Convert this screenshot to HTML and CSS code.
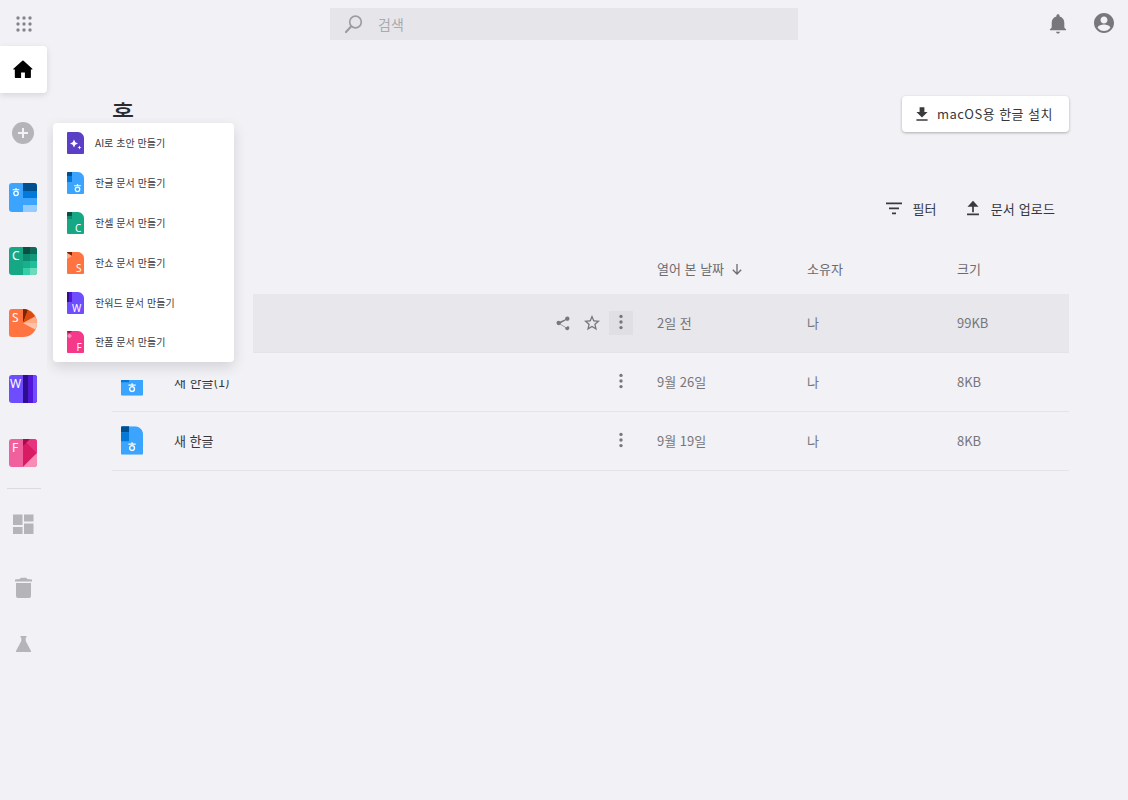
FILE: index.html
```html
<!DOCTYPE html>
<html lang="ko">
<head>
<meta charset="utf-8">
<title>한컴독스 홈</title>
<link rel="stylesheet" href="styles.css">
</head>
<body>
<svg class="sprite" xmlns="http://www.w3.org/2000/svg">
  <symbol id="hieut" viewBox="0 0 12 12">
    <path d="M6 .5v2M1.500 3h9" fill="none" stroke="currentColor" stroke-width="1.600"/>
    <circle cx="6" cy="7.800" r="3" fill="none" stroke="currentColor" stroke-width="1.700"/>
  </symbol>
  <symbol id="file-shape" viewBox="0 0 17 22">
    <path d="M1 0h10c3 0 6 3 6 6v15a1 1 0 0 1-1 1H1a1 1 0 0 1-1-1V1a1 1 0 0 1 1-1z"/>
  </symbol>
  <symbol id="i-share" viewBox="0 0 24 24">
    <path d="M18 16.100c-.8 0-1.400.3-2 .8l-7.100-4.200c.1-.2.100-.5.100-.7s0-.5-.1-.7L16 7.200c.5.5 1.200.8 2 .8 1.700 0 3-1.300 3-3s-1.300-3-3-3-3 1.300-3 3c0 .2 0 .5.100.7L8 8.900C7.500 8.400 6.800 8 6 8c-1.700 0-3 1.300-3 3s1.300 3 3 3c.8 0 1.500-.3 2-.8l7.100 4.200c-.1.200-.1.400-.1.600 0 1.600 1.300 2.900 2.900 2.900s2.900-1.300 2.900-2.900-1.200-2.900-2.800-2.900z" transform="translate(0 1)"/>
  </symbol>
  <symbol id="i-star" viewBox="0 0 24 24">
    <path d="M22 9.240l-7.190-.62L12 2 9.190 8.630 2 9.240l5.460 4.730L5.820 21 12 17.270 18.180 21l-1.630-7.030L22 9.240zM12 15.400l-3.760 2.270 1-4.280-3.320-2.880 4.380-.38L12 6.100l1.710 4.040 4.380.38-3.320 2.880 1 4.280L12 15.400z"/>
  </symbol>
  <symbol id="i-more" viewBox="0 0 24 24">
    <circle cx="12" cy="5" r="2.100"/><circle cx="12" cy="12" r="2.100"/><circle cx="12" cy="19" r="2.100"/>
  </symbol>
</svg>

<div class="app">
  <header class="topbar">
    <div class="apps">
      <svg width="16" height="16" viewBox="0 0 16 16" fill="#85858b">
        <circle cx="2" cy="2" r="1.700"/><circle cx="8" cy="2" r="1.700"/><circle cx="14" cy="2" r="1.700"/>
        <circle cx="2" cy="8" r="1.700"/><circle cx="8" cy="8" r="1.700"/><circle cx="14" cy="8" r="1.700"/>
        <circle cx="2" cy="14" r="1.700"/><circle cx="8" cy="14" r="1.700"/><circle cx="14" cy="14" r="1.700"/>
      </svg>
    </div>
    <div class="search">
      <svg class="search-icon" width="20" height="20" viewBox="0 0 20 20" fill="none" stroke="#9c9ca2">
        <circle cx="11.500" cy="8" r="5.800" stroke-width="1.700"/>
        <path d="M7.300 12.200 2 18" stroke-width="2.200" stroke-linecap="round"/>
      </svg>
      <span class="search-text">검색</span>
    </div>
    <div class="top-actions">
      <svg width="24" height="24" viewBox="0 0 24 24" fill="#77777c"><path transform="translate(1.200 2.200) scale(.9)" d="M12 22.500c1.200 0 2.100-.9 2.100-2h-4.200c0 1.100.9 2 2.100 2zm7-6.500v-5.500c0-3.300-2.100-6-5.200-6.800v-.7c0-1-.8-1.700-1.800-1.700s-1.800.7-1.800 1.700v.7C7.100 4.500 5 7.200 5 10.500V16l-2 2v1h18v-1l-2-2z"/></svg>
      <svg width="24" height="24" viewBox="0 0 24 24" fill="#77777c"><path d="M12 2C6.480 2 2 6.480 2 12s4.480 10 10 10 10-4.480 10-10S17.520 2 12 2zm0 3.500c1.930 0 3.500 1.570 3.500 3.500S13.930 12.500 12 12.500 8.500 10.930 8.500 9 10.070 5.500 12 5.500zM12 20c-2.600 0-4.900-1.300-6.300-3.300.05-2 4.200-3.100 6.300-3.100s6.250 1.100 6.300 3.100C16.900 18.700 14.600 20 12 20z"/></svg>
    </div>
  </header>

  <div class="layout">
    <nav class="sidebar">
      <div class="home-tile">
        <svg width="24" height="24" viewBox="0 0 24 24" fill="#000"><path transform="translate(.6 .6) scale(.95)" d="M10 20.500v-6h4v6h5.500a.8.800 0 0 0 .8-.8v-8.200l1.200.1c.5 0 .7-.6.300-.9L12.600 2.300a1 1 0 0 0-1.300 0L1.900 10.700c-.4.300-.2.900.3.900l1.200-.1v8.200a.8.800 0 0 0 .8.800z"/></svg>
      </div>
      <div class="nav-item">
        <svg width="22" height="22" viewBox="0 0 22 22"><circle cx="11" cy="11" r="11" fill="#b4b4b9"/><path d="M11 6v10M6 11h10" stroke="#f1f1f6" stroke-width="2"/></svg>
      </div>
      <div class="nav-item">
        <svg width="28" height="29" viewBox="0 0 28 29">
          <rect width="28" height="29" rx="3" fill="#3ba4ff"/>
          <path d="M14 0h11a3 3 0 0 1 3 3v5H14z" fill="#00508f"/>
          <path d="M14 8h14v7H14z" fill="#0579d8"/>
          <path d="M14 15h14v7H14z" fill="#3ba4ff"/>
          <path d="M14 22h14v4a3 3 0 0 1-3 3H14z" fill="#95cbff"/>
          <use href="#hieut" x="2.500" y="4.500" width="9" height="9" color="#fff"/>
        </svg>
      </div>
      <div class="nav-item">
        <svg width="28" height="28" viewBox="0 0 28 28">
          <rect width="28" height="28" rx="3" fill="#16a884"/>
          <path d="M14 0h7v7h-7z" fill="#0a4f42"/><path d="M21 0h4a3 3 0 0 1 3 3v4h-7z" fill="#0f6b57"/>
          <path d="M14 7h7v7h-7z" fill="#0f8a6e"/><path d="M21 7h7v7h-7z" fill="#129a7c"/>
          <path d="M14 14h7v7h-7z" fill="#18b08c"/><path d="M21 14h7v7h-7z" fill="#20bf99"/>
          <path d="M14 21h7v7h-7z" fill="#34cfa6"/><path d="M21 21h7v4a3 3 0 0 1-3 3h-4z" fill="#6adcbd"/>
          <text x="3" y="13" class="tile-letter">C</text>
        </svg>
      </div>
      <div class="nav-item shift-up">
        <svg width="28" height="28" viewBox="0 0 28 28">
          <path d="M3 0h11c8 0 14 6 14 14s-6 14-14 14H3a3 3 0 0 1-3-3V3a3 3 0 0 1 3-3z" fill="#ff7440"/>
          <path d="M14 0c2 0 3.500.3 5 1l-5 13z" fill="#7c2500"/>
          <path d="M19 1c3 1.300 5.500 3.600 7 6.500L14 14z" fill="#d94a10"/>
          <path d="M26 7.500c1.300 2 2 4.200 2 6.500H14z" fill="#ffa985"/>
          <path d="M28 14c0 2.500-.7 4.700-2 6.500L14 14z" fill="#ffc3a8"/>
          <text x="3" y="13" class="tile-letter">S</text>
        </svg>
      </div>
      <div class="nav-item">
        <svg width="28" height="28" viewBox="0 0 28 28">
          <rect width="28" height="28" rx="3" fill="#6e4dff"/>
          <path d="M14 0h5v28h-5z" fill="#2e0d8f"/>
          <path d="M19 0h6a3 3 0 0 1 3 3v22a3 3 0 0 1-3 3h-6z" fill="#5216d8"/>
          <path d="M24 0h1a3 3 0 0 1 3 3v22a3 3 0 0 1-3 3h-1z" fill="#6e4dff"/>
          <text x="1" y="13" class="tile-letter">W</text>
        </svg>
      </div>
      <div class="nav-item">
        <svg width="28" height="28" viewBox="0 0 28 28">
          <rect width="28" height="28" rx="3" fill="#f0609c"/>
          <path d="M14 0h11a3 3 0 0 1 3 3v11L14 0z" fill="#e8347e"/>
          <path d="M14 0l14 14-14 14z" fill="#d81b63"/>
          <path d="M14 0h7l-7 7z" fill="#a30d4a"/>
          <path d="M28 14v11a3 3 0 0 1-3 3H14l7-7z" fill="#f78cb6"/>
          <text x="3" y="13" class="tile-letter">F</text>
        </svg>
      </div>
      <hr class="nav-divider">
      <div class="nav-item">
        <svg width="24" height="24" viewBox="0 0 24 24" fill="#b4b4b9"><path d="M2 13h9.500V2.500H2zm0 9h9.500v-7H2zm11 0h9.500V11.500H13zM13 2.500v7h9.500v-7z"/></svg>
      </div>
      <div class="nav-item">
        <svg width="24" height="24" viewBox="0 0 24 24" fill="#b4b4b9"><path d="M4 5.500V3.500l5-.6.6-1.200h5.800l.6 1.200 5 .6v2zM5 7h15v13a2 2 0 0 1-2 2H7a2 2 0 0 1-2-2z"/></svg>
      </div>
      <div class="nav-item short">
        <svg width="20" height="20" viewBox="0 0 20 20" fill="#b4b4b9"><path d="M7.500 2h6v1.500h-.8V7l5.300 10c.3.500 0 1-.5 1H3.500c-.5 0-.8-.5-.5-1L8.300 7V3.500h-.8z"/></svg>
      </div>
    </nav>

    <main class="content">
      <div class="title-row">
        <h1 class="title">홈</h1>
        <button class="install">
          <svg width="24" height="24" viewBox="0 0 24 24" fill="#3a3a3e"><path d="M19 9.500h-4V3.500H9v6H5l7 7zM5 18.500v2h14v-2z" transform="translate(2.400 2.400) scale(.8)"/></svg>
          <span>macOS용 한글 설치</span>
        </button>
      </div>

      <div class="toolbar">
        <button class="tool">
          <svg width="24" height="24" viewBox="0 0 24 24" fill="#3a3a3e"><path d="M4 6.500h16v1.700H4zM7 11.500h10v1.700H7zM10 16.500h4v1.700h-4z"/></svg>
          <span>필터</span>
        </button>
        <button class="tool">
          <svg width="24" height="24" viewBox="0 0 24 24" fill="#3a3a3e"><path transform="translate(1.800 1.800) scale(.85)" d="M5 18.500v2h14v-2zM12 3.500 5.500 10.500H11v6.500h2v-6.500h5.500z"/></svg>
          <span>문서 업로드</span>
        </button>
      </div>

      <div class="table">
        <div class="row head">
          <div></div>
          <div class="sort">열어 본 날짜
            <svg width="14" height="14" viewBox="0 0 14 14" fill="none" stroke="#6b6b70" stroke-width="1.300"><path d="M7 2v10M2.800 7.800 7 12l4.200-4.200"/></svg>
          </div>
          <div>소유자</div>
          <div>크기</div>
        </div>

        <div class="row item hover">
          <div class="name-cell">
            <svg class="file-icon"><use href="#file-shape" fill="#3ba4ff"/></svg>
            <span class="name">새 한글(2)</span>
            <div class="actions">
              <svg class="act act-share"><use href="#i-share"/></svg>
              <svg class="act act-star"><use href="#i-star"/></svg>
              <span class="more-box"><svg class="act"><use href="#i-more"/></svg></span>
            </div>
          </div>
          <div>2일 전</div><div>나</div><div>99KB</div>
        </div>

        <div class="row item">
          <div class="name-cell">
            <svg class="file-icon" viewBox="0 0 17 22">
              <use href="#file-shape" width="17" height="22" fill="#3ba4ff"/>
              <path d="M1 0h5.200v4.600H0V1a1 1 0 0 1 1-1z" fill="#00508f"/><rect y="4.600" width="6.200" height="7" fill="#0579d8"/>
              <use href="#hieut" x="4.800" y="12" width="7.500" height="7.500" color="#fff"/>
            </svg>
            <span class="name">새 한글(1)</span>
            <div class="actions">
              <span class="more-box plain"><svg class="act"><use href="#i-more"/></svg></span>
            </div>
          </div>
          <div>9월 26일</div><div>나</div><div>8KB</div>
        </div>

        <div class="row item">
          <div class="name-cell">
            <svg class="file-icon" viewBox="0 0 17 22">
              <use href="#file-shape" width="17" height="22" fill="#3ba4ff"/>
              <path d="M1 0h5.200v4.600H0V1a1 1 0 0 1 1-1z" fill="#00508f"/><rect y="4.600" width="6.200" height="7" fill="#0579d8"/>
              <use href="#hieut" x="4.800" y="12" width="7.500" height="7.500" color="#fff"/>
            </svg>
            <span class="name">새 한글</span>
            <div class="actions">
              <span class="more-box plain"><svg class="act"><use href="#i-more"/></svg></span>
            </div>
          </div>
          <div>9월 19일</div><div>나</div><div>8KB</div>
        </div>
      </div>
    </main>
  </div>

  <div class="menu-layer">
    <ul class="menu">
      <li class="menu-item">
        <svg class="menu-icon" viewBox="0 0 17 22">
          <use href="#file-shape" width="17" height="22" fill="#5b3fc4"/>
          <path d="M7 7.500l1.300 2.700 2.700 1.300-2.700 1.300L7 15.500l-1.300-2.700L3 11.500l2.700-1.300zM12.500 13.500l.6 1.400 1.400.6-1.400.6-.6 1.400-.6-1.400-1.400-.6 1.400-.6z" fill="#fff"/>
        </svg>
        <span>AI로 초안 만들기</span>
      </li>
      <li class="menu-item">
        <svg class="menu-icon" viewBox="0 0 17 22">
          <use href="#file-shape" width="17" height="22" fill="#3ba4ff"/>
          <path d="M1 0h4v4H0V1a1 1 0 0 1 1-1z" fill="#00508f"/><rect y="4" width="5" height="6" fill="#0579d8"/>
          <use href="#hieut" x="6" y="11.500" width="9" height="9" color="#fff"/>
        </svg>
        <span>한글 문서 만들기</span>
      </li>
      <li class="menu-item">
        <svg class="menu-icon" viewBox="0 0 17 22">
          <use href="#file-shape" width="17" height="22" fill="#16a884"/>
          <path d="M1 0h4v4H0V1a1 1 0 0 1 1-1z" fill="#0a4f42"/><rect y="4" width="5" height="3" fill="#0f8a6e"/>
          <text x="8" y="20" class="file-letter">C</text>
        </svg>
        <span>한셀 문서 만들기</span>
      </li>
      <li class="menu-item">
        <svg class="menu-icon" viewBox="0 0 17 22">
          <use href="#file-shape" width="17" height="22" fill="#ff7440"/>
          <path d="M0 1a1 1 0 0 1 1-1h4v4z" fill="#7c2500"/><path d="M0 1l5 3-5 3z" fill="#ffa985"/>
          <text x="9" y="20" class="file-letter">S</text>
        </svg>
        <span>한쇼 문서 만들기</span>
      </li>
      <li class="menu-item">
        <svg class="menu-icon" viewBox="0 0 17 22">
          <use href="#file-shape" width="17" height="22" fill="#6e4dff"/>
          <rect width="2" height="10" fill="#2e0d8f"/><rect x="2" width="3" height="10" fill="#5216d8"/>
          <text x="5" y="20" class="file-letter">W</text>
        </svg>
        <span>한워드 문서 만들기</span>
      </li>
      <li class="menu-item">
        <svg class="menu-icon" viewBox="0 0 17 22">
          <use href="#file-shape" width="17" height="22" fill="#f5388a"/>
          <path d="M0 1a1 1 0 0 1 1-1h4L2.500 2.500z" fill="#a30d4a"/><path d="M2.500 2.500 5 5 2.500 7.500 0 5z" fill="#f78cb6"/>
          <text x="9.500" y="20" class="file-letter">F</text>
        </svg>
        <span>한폼 문서 만들기</span>
      </li>
    </ul>
  </div>
</div>
</body>
</html>
```

FILE: styles.css
```css
* { box-sizing: border-box; }

html, body {
  margin: 0;
  padding: 0;
}

body {
  background: #f1f1f6;
  font-family: "Noto Sans CJK KR", "Noto Sans", sans-serif;
  color: #37373b;
}

.sprite { display: none; }

.app {
  position: relative;
  width: 1128px;
  height: 800px;
  overflow: hidden;
}

/* top bar */
.topbar {
  display: grid;
  grid-template-columns: 330px 468px 1fr;
  height: 46px;
  padding-top: 8px;
}

.apps {
  padding: 8px 0 0 16px;
}

.apps svg,
.top-actions svg { display: block; }

.search {
  display: flex;
  align-items: center;
  height: 32px;
  padding-left: 14px;
  background: #e6e6ea;
}

.search-text {
  margin-left: 14px;
  font-size: 14px;
  color: #a9a9ae;
}

.top-actions {
  display: flex;
  justify-content: flex-end;
  gap: 22px;
  padding: 3px 12px 0 0;
}

/* layout */
.layout {
  display: flex;
  height: 754px;
}

.sidebar {
  flex: 0 0 47px;
  display: flex;
  flex-direction: column;
  align-items: flex-start;
}

.home-tile {
  display: flex;
  align-items: center;
  justify-content: center;
  width: 47px;
  height: 47px;
  padding-right: 1px;
  margin-bottom: 8px;
  background: #fff;
  border-radius: 0 4px 4px 0;
  box-shadow: 0 2px 6px rgba(0, 0, 0, .12);
}

.nav-item {
  display: flex;
  align-items: center;
  justify-content: center;
  flex: 0 0 64px;
  width: 46px;
}

.nav-item.short { flex-basis: 48px; }
.nav-item.shift-up { padding-bottom: 4px; }

.tile-letter {
  font-family: "Noto Sans", sans-serif;
  font-size: 12px;
  font-weight: 400;
  fill: #fff;
}

.file-letter {
  font-family: "Noto Sans", sans-serif;
  font-size: 10px;
  font-weight: 400;
  fill: #fff;
}

.nav-divider {
  align-self: center;
  width: 34px;
  height: 1px;
  margin: 3px 0 3px;
  border: 0;
  background: #dcdce0;
}

/* content */
.content {
  flex: 1;
  padding: 50px 59px 0 65px;
}

.title-row {
  display: flex;
  justify-content: space-between;
  align-items: flex-start;
  height: 36px;
}

.title {
  margin: 0;
  font-size: 24px;
  line-height: 34px;
  font-weight: 500;
  color: #2b2b2f;
}

button {
  font: inherit;
  color: inherit;
  border: 0;
  background: none;
  padding: 0;
}

.install {
  display: flex;
  align-items: center;
  gap: 3px;
  width: 167px;
  height: 36px;
  padding: 0 0 1px 8px;
  font-size: 13px;
  letter-spacing: .45px;
  background: #fff;
  border-radius: 4px;
  box-shadow: 0 1px 3px rgba(0, 0, 0, .28);
}

.toolbar {
  display: flex;
  justify-content: flex-end;
  gap: 24px;
  margin-top: 64px;
  padding-right: 14px;
  height: 24px;
}

.tool {
  display: flex;
  align-items: center;
  gap: 6px;
  font-size: 13px;
  letter-spacing: .15px;
}

/* table */
.table {
  margin-top: 37px;
  font-size: 13px;
  color: #76767b;
}

.row {
  display: grid;
  grid-template-columns: 545px 150px 150px 1fr;
  align-items: center;
}

.head {
  height: 37px;
  align-items: start;
  line-height: 24px;
  color: #6b6b70;
}

.sort {
  display: flex;
  align-items: center;
  gap: 6px;
}

.item {
  height: 59px;
  padding-bottom: 1px;
  border-bottom: 1px solid #e4e4e8;
}

.item.hover { background: #e7e7ec; }

.name-cell {
  display: flex;
  align-items: center;
  padding: 0 24px 0 9px;
}

.file-icon {
  width: 22px;
  height: 29px;
}

.name {
  margin-left: 31px;
  color: #37373b;
  font-size: 13px;
}

.actions {
  display: flex;
  align-items: center;
  gap: 5px;
  margin-left: auto;
}

.act {
  display: block;
  width: 24px;
  height: 24px;
  fill: #77777c;
}

.act-share { transform: scale(.72); }
.act-star { transform: scale(.8); }

.more-box {
  display: block;
  width: 24px;
  height: 24px;
  background: #dfdfe4;
}

.more-box.plain { background: none; }

.more-box .act {
  transform: translateY(-1px) scale(.8);
}

/* create menu: a page-coloured layer that masks the content under it */
.menu-layer {
  position: absolute;
  left: 47px;
  top: 117px;
  width: 206px;
  height: 263px;
  padding: 6px 0 0 6px;
  overflow: hidden;
  background: #f1f1f6;
}

.menu {
  width: 181px;
  margin: 0;
  padding: 0;
  list-style: none;
  background: #fff;
  border-radius: 4px;
  box-shadow: 0 5px 14px rgba(0, 0, 0, .13);
}

.menu-item {
  display: flex;
  align-items: center;
  gap: 11px;
  height: 40px;
  padding-left: 14px;
  font-size: 10px;
  letter-spacing: .05px;
  color: #3a3a3e;
}

.menu-item span { margin-bottom: 2px; }

.menu-item:last-child { height: 39px; }

.menu-icon {
  flex: none;
  width: 17px;
  height: 22px;
  margin-bottom: 1px;
}
```
